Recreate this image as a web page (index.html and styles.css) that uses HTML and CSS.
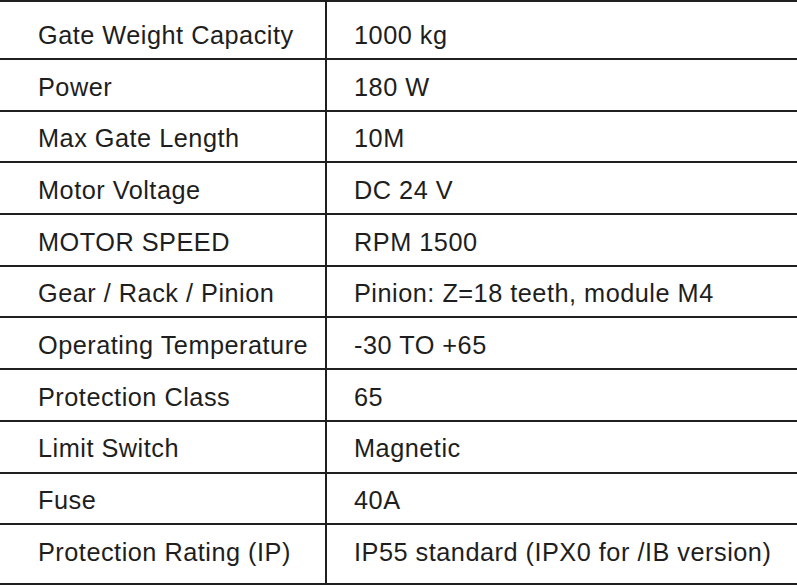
FILE: index.html
```html
<!DOCTYPE html>
<html lang="en">
<head>
<meta charset="utf-8">
<title>Specifications</title>
<link rel="stylesheet" href="styles.css">
</head>
<body>
<div class="spec">
  <div class="row first"><div class="label">Gate Weight Capacity</div><div class="value">1000 kg</div></div>
  <div class="row"><div class="label">Power</div><div class="value">180 W</div></div>
  <div class="row"><div class="label">Max Gate Length</div><div class="value">10M</div></div>
  <div class="row"><div class="label">Motor Voltage</div><div class="value">DC 24 V</div></div>
  <div class="row"><div class="label">MOTOR SPEED</div><div class="value">RPM 1500</div></div>
  <div class="row"><div class="label">Gear / Rack / Pinion</div><div class="value">Pinion: Z=18 teeth, module M4</div></div>
  <div class="row"><div class="label">Operating Temperature</div><div class="value">-30 TO +65</div></div>
  <div class="row"><div class="label">Protection Class</div><div class="value">65</div></div>
  <div class="row"><div class="label">Limit Switch</div><div class="value">Magnetic</div></div>
  <div class="row"><div class="label">Fuse</div><div class="value">40A</div></div>
  <div class="row last"><div class="label">Protection Rating (IP)</div><div class="value">IP55 standard (IPX0 for /IB version)</div></div>
</div>
</body>
</html>
```

FILE: styles.css
```css
html, body {
  margin: 0;
  padding: 0;
  background: #ffffff;
}

body {
  font-family: "Liberation Sans", Arial, sans-serif;
  font-size: 25.3px;
  letter-spacing: 0.5px;
  color: #1e1e1e;
}

.spec {
  width: 797px;
  border-top: 2px solid #1f1f1f;
}

.row {
  box-sizing: border-box;
  display: grid;
  grid-template-columns: 327px 1fr;
  height: 51.7px;
  border-bottom: 2px solid #1f1f1f;
}

.row.first {
  height: 58px;
}

.row.last {
  height: 60px;
}

.label,
.value {
  box-sizing: border-box;
  display: flex;
  align-items: center;
  white-space: nowrap;
  padding-top: 4.5px;
}

.label {
  padding-left: 38px;
  border-right: 2px solid #1f1f1f;
}

.value {
  padding-left: 27px;
}

.row.first .label,
.row.first .value {
  padding-top: 10.8px;
}

.row.last .label,
.row.last .value {
  padding-bottom: 8.3px;
}
```
